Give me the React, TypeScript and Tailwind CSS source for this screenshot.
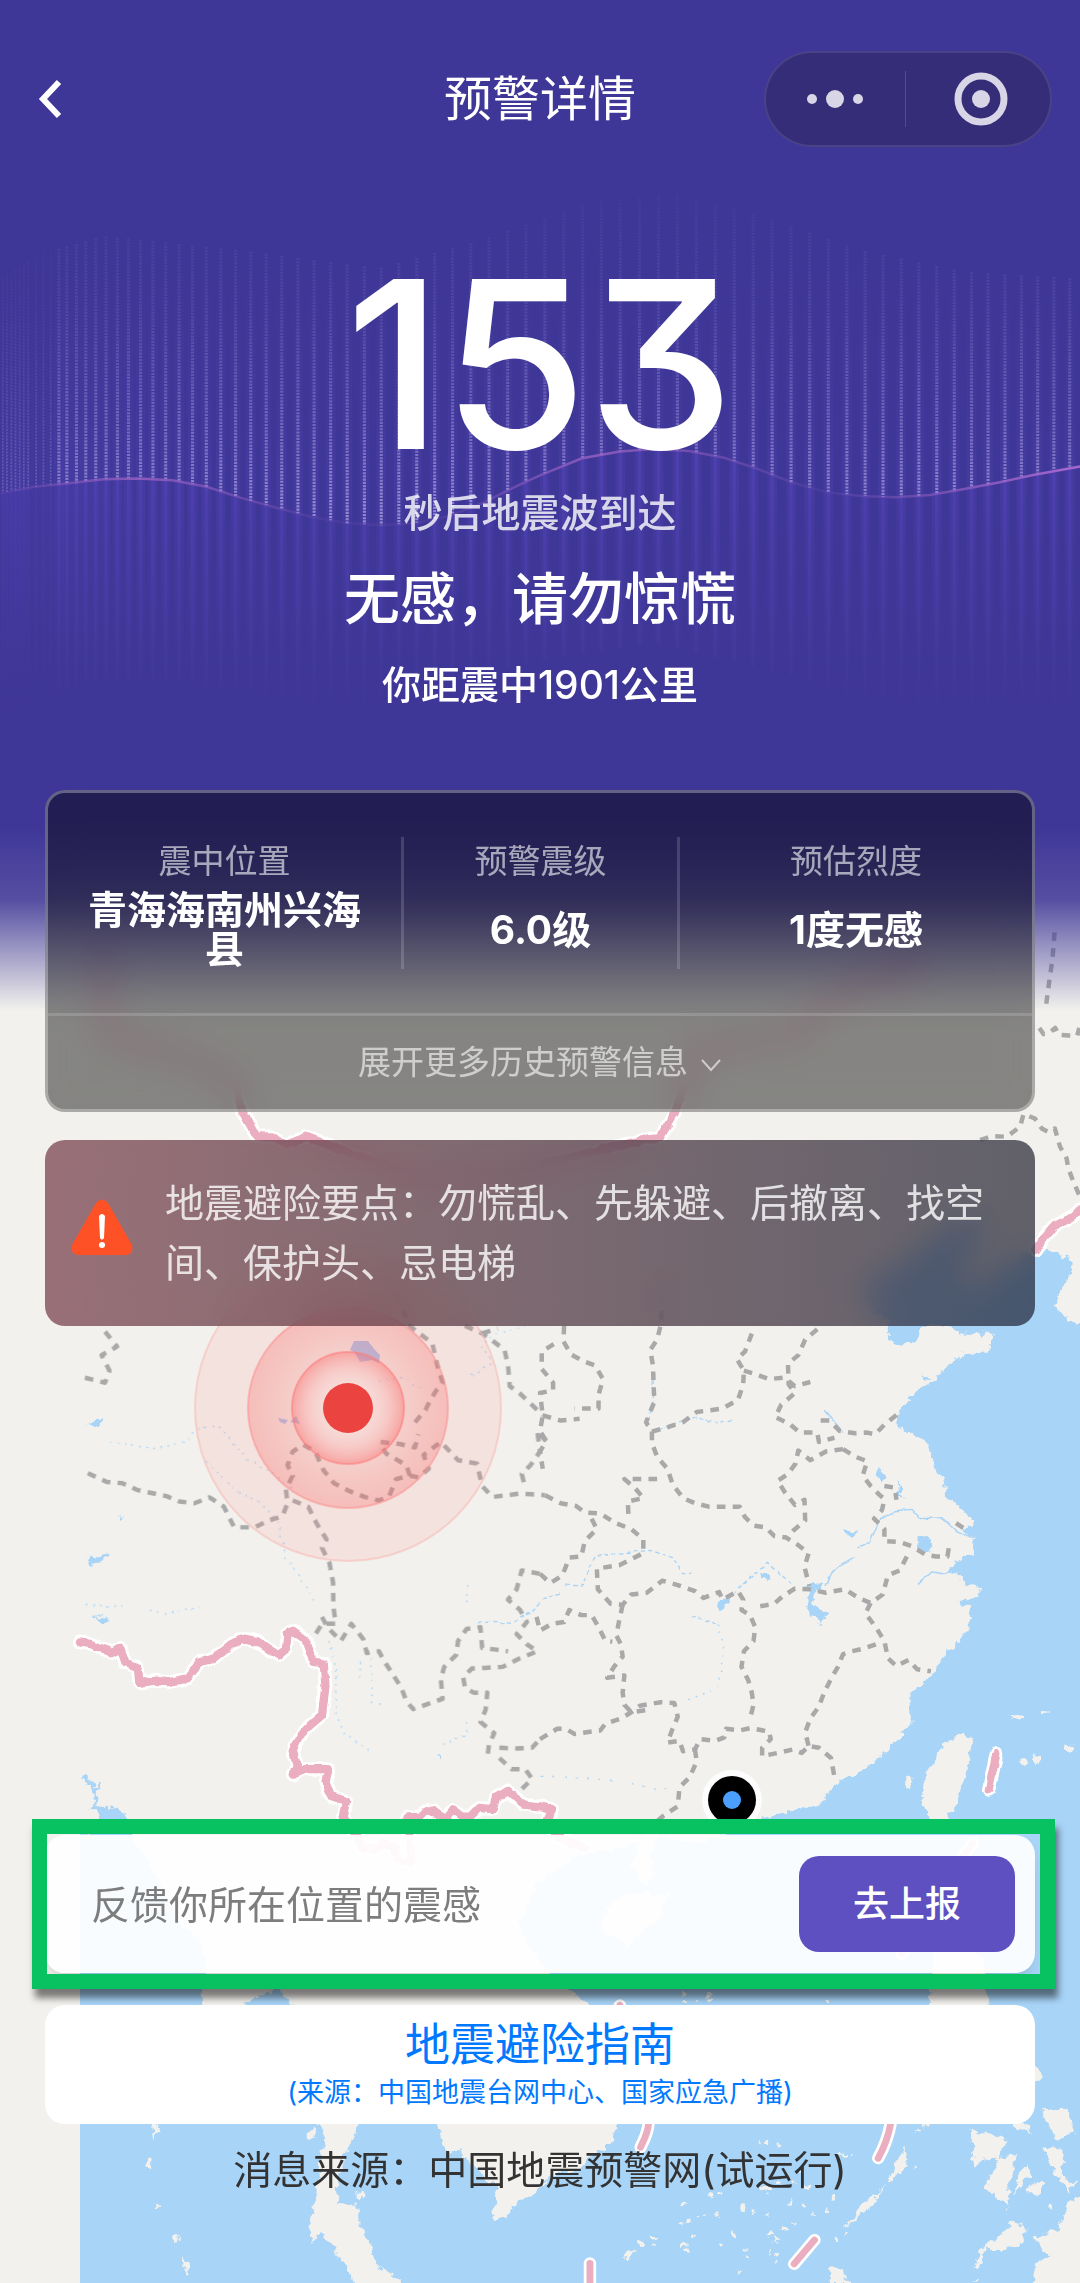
// Wave chart: x of every bar, in the chart's own units
const bars = [
  8, 20, 33, 45, 57, 69, 82, 105, 126, 147, 171, 194, 222, 249, 278, 308, 341, 373, 408, 444, 481, 520, 559,
  599, 641, 684, 728, 773, 818, 865, 912, 960, 1008, 1058, 1107, 1158, 1210, 1262, 1314, 1367, 1420, 1474,
  1527, 1582, 1637, 1692, 1746, 1801, 1857, 1912, 1967, 2022, 2077, 2132, 2187, 2242, 2297, 2351, 2405, 2459,
  2512, 2564, 2617, 2668, 2720, 2771, 2821, 2869, 2918, 2966, 3013, 3060, 3106,
];

type Point = [number, number];

const wave: Point[] = [
  [0, 820], [100, 802], [200, 792], [300, 781], [400, 779], [500, 784], [600, 802], [700, 833], [800, 860],
  [900, 885], [1000, 903], [1100, 910], [1200, 905], [1300, 885], [1400, 848], [1500, 800], [1568, 770],
  [1690, 722], [1800, 703], [1900, 696], [2000, 702], [2100, 720], [2200, 752], [2300, 790], [2400, 817],
  [2500, 828], [2600, 831], [2700, 825], [2800, 808], [2900, 790], [3000, 769], [3136, 745],
];

const waveTop: Point[] = [
  [0, 220], [120, 150], [300, 100], [700, 140], [1100, 190], [1400, 110], [1700, 10], [1950, -20], [2200, 40],
  [2500, 140], [2800, 200], [3136, 220],
];

const waveBottom: Point[] = [
  [0, 1460], [250, 1340], [500, 1340], [1100, 1440], [1500, 1300], [1900, 1240], [2300, 1330], [2700, 1460],
  [3136, 1440],
];

function heightAt(points: Point[], x: number) {
  const next = points.findIndex((p) => p[0] >= x);
  if (next <= 0) return points[0][1];
  const [x0, y0] = points[next - 1];
  const [x1, y1] = points[next];
  return Math.round(y0 + ((y1 - y0) * (x - x0)) / (x1 - x0));
}

function Wave() {
  return (
    <svg
      viewBox="0 -60 3136 1560"
      preserveAspectRatio="none"
      className="absolute inset-x-0 top-[179px] h-[557px] w-full"
      aria-hidden="true"
    >
      <defs>
        <linearGradient id="barUp" gradientUnits="userSpaceOnUse" x1="0" y1="0" x2="0" y2="860">
          <stop offset="0" stopColor="#8f86d6" stopOpacity="0.05" />
          <stop offset="0.35" stopColor="#8f86d6" stopOpacity="0.18" />
          <stop offset="0.7" stopColor="#a39adf" stopOpacity="0.45" />
          <stop offset="1" stopColor="#b3abe6" stopOpacity="0.7" />
        </linearGradient>
        <linearGradient id="barDown" gradientUnits="userSpaceOnUse" x1="0" y1="700" x2="0" y2="1440">
          <stop offset="0" stopColor="#5544bd" stopOpacity="0.8" />
          <stop offset="1" stopColor="#5544bd" stopOpacity="0" />
        </linearGradient>
        <linearGradient id="glow" gradientUnits="userSpaceOnUse" x1="0" y1="200" x2="0" y2="1300">
          <stop offset="0" stopColor="#5645bd" stopOpacity="0" />
          <stop offset="0.55" stopColor="#5645bd" stopOpacity="0.6" />
          <stop offset="1" stopColor="#5645bd" stopOpacity="0" />
        </linearGradient>
        <linearGradient id="waveLine" x1="0" x2="1" y1="0" y2="0">
          <stop offset="0" stopColor="#9b62c4" stopOpacity="0.1" />
          <stop offset="0.13" stopColor="#9b62c4" stopOpacity="0.8" />
          <stop offset="0.3" stopColor="#9b62c4" stopOpacity="0.1" />
          <stop offset="0.4" stopColor="#9b62c4" stopOpacity="0.1" />
          <stop offset="0.55" stopColor="#9b62c4" stopOpacity="0.8" />
          <stop offset="0.76" stopColor="#9b62c4" stopOpacity="0.1" />
          <stop offset="1" stopColor="#a868cf" stopOpacity="1" />
        </linearGradient>
      </defs>
      {bars.map((x) => {
        const y = heightAt(wave, x);
        const top = heightAt(waveTop, x);
        const bottom = heightAt(waveBottom, x);
        const edge = x < 160;
        return (
          <g key={x} opacity={edge ? 0.5 : 1}>
            <rect x={x - 14} y={top} width="28" height={bottom - top} fill="url(#glow)" opacity="0.4" />
            <rect x={x - 5} y={y} width="10" height={bottom - y} fill="url(#barDown)" opacity="0.7" />
            <path
              d={`M${x} ${top} L${x + 0.1} ${y}`}
              stroke="url(#barUp)"
              strokeWidth={edge ? 5 : 9}
              strokeDasharray="6 3"
            />
          </g>
        );
      })}
      <path d={`M${wave.map((p) => p.join(" ")).join(" L")}`} fill="none" stroke="url(#waveLine)" strokeWidth="7" />
    </svg>
  );
}

const westBorders = [
  "M305,92 340,135 295,160 318,205 305,240 232,222",
  "M255,503 310,528 355,532 400,552 485,570 520,585 565,590 608,573 650,600 680,660 740,660 780,640 820,628 835,590 830,550 850,510 835,480 850,440 880,420 915,440 940,495 970,532 1015,555 1060,572 1100,582 1130,570 1150,520 1190,510 1180,480 1120,445 1105,412 1160,418 1205,428 1215,390",
  "M1205,355 1235,320 1250,290 1265,265 1285,240 1270,190 1255,125 1215,95 1190,75 1130,-60",
  "M1190,510 1215,515 1245,490 1230,450 1280,412 1330,465 1385,475 1400,540 1430,572 1510,562 1583,567",
  "M850,582 895,600 920,650 948,695 935,720 957,765 967,820 968,890 975,940 935,940 910,980",
  "M935,920 950,950 990,990 1020,940 1055,985 1065,1025 1100,1020 1120,1055 1165,1125 1180,1165 1200,1188 1285,1158 1280,1100 1290,1065 1325,1030 1330,990 1355,955 1395,950 1400,1010 1440,1015 1475,1020",
  "M1350,75 1400,97 1430,118 1465,145 1475,190 1480,250 1510,272 1540,300 1576,335",
  "M1400,97 1445,83",
  "M1586,410 1560,380 1568,440 1540,480 1515,505 1525,545",
  "M1568,795 1515,785 1500,840 1475,870 1510,900 1530,935 1500,970 1530,1000 1560,1020 1510,1040 1460,1065 1410,1068 1370,1070 1345,1095 1350,1125 1375,1140 1415,1140 1410,1190 1395,1225 1435,1258 1420,1290 1415,1330",
  "M1450,1300 1500,1302 1545,1300 1568,1275",
  "M1450,1330 1485,1362 1525,1362 1545,1390 1515,1420 1495,1440",
];

const eastBorders = [
  "M70,75 68,120 90,158 125,177 160,190 183,230 170,275 170,315 100,315",
  "M40,128 5,150 5,200 38,240 38,262 0,270 8,335 0,380 18,410 0,440 8,490",
  "M8,335 60,350 115,345",
  "M360,-60 350,75 340,115 320,145 328,190 330,250 332,295 308,355 325,382 325,415 340,455 370,490 385,535 415,575 450,590 490,600 580,600 595,630 620,655 655,660 680,685 715,690 750,712 780,735 768,775 782,830",
  "M325,382 375,368 415,355 455,325 495,320 530,315 575,290 590,245 592,205 572,172 595,150 618,90",
  "M592,205 625,215 665,230 710,225 740,250 785,238",
  "M805,85 770,115 750,160 720,185 722,245 740,270 700,305 683,340 725,360 755,385 805,385 810,412 855,400",
  "M815,350 840,350 870,380 915,387 950,385 973,390 1000,362 1040,330",
  "M880,433 915,455 950,468 937,510 960,540 985,565 1000,578 993,610 970,635 1000,665 1000,700 1045,703 1080,715 1120,740 1150,745 1183,745 1190,700",
  "M880,433 830,440 785,465 750,437 742,475 720,505 690,525 712,560 740,595 768,580 770,640 735,670 715,690",
  "M1000,540 1030,545 1035,580",
  "M1065,745 1045,785 1010,800 995,855 960,880 925,865 885,840 830,850 782,840 740,838 705,860 680,882 635,890",
  "M15,567 60,590 105,598 130,617 175,620 220,648 265,665 300,695 300,735 260,755 230,770 165,780 168,840 205,882 240,885 265,855 310,850 355,815 400,828 450,845 475,865 520,848 530,870 575,845 590,870 585,900 610,915 625,950 620,990 592,1020 585,1065 605,1105 615,1140 620,1175 610,1215",
  "M150,635 165,665 130,700 120,745 85,748 65,800 30,822 0,795",
  "M340,520 295,520 245,520 275,545 300,575 255,585 257,630",
  "M240,885 228,940 222,975 235,1000 240,1035 215,1065 195,1097 245,1090 240,1140 245,1175 265,1197 315,1190",
  "M-10,920 0,960 35,940 70,935 85,900 120,915 150,915 170,950 190,990 210,992",
  "M0,1275 50,1245 75,1245 100,1260 135,1255 175,1250 190,1230 235,1215 265,1197 290,1178 350,1168 390,1170 400,1210 385,1245 370,1285 405,1280 415,1310 450,1305 465,1275 510,1280 535,1270 540,1245 580,1250 610,1243 665,1253 670,1275 645,1300 645,1325 690,1315 735,1305 760,1315 780,1295 810,1300 845,1330 855,1385",
  "M450,1305 455,1340 435,1385 405,1415 400,1470 355,1500 290,1560",
  "M960,880 945,910 975,950 1000,990 1010,1040 1035,1063 1070,1045 1095,1072 1135,1078",
  "M975,1000 940,1012 905,1020 880,1028 865,1065 845,1100 825,1140 810,1180 785,1215 770,1255 780,1295",
  "M1208,648 1232,664",
  "M1450,-790 1462,-772 1482,-778 1496,-790 1506,-770 1534,-768 1560,-768 1566,-790",
  "M1278,-464 1311,-476 1355,-474 1394,-503 1404,-540 1437,-527 1457,-498 1476,-488 1495,-498 1510,-445 1529,-411 1534,-382 1549,-343 1568,-300",
  "M1470,-860 1478,-920 1488,-990 1495,-1080",
];

const nationalBorders = [
  "M232,994 270,1000 325,1025 350,1010 365,1055 400,1065 405,1112 450,1105 490,1110 545,1098 580,1052 620,1040 670,1000 705,982 745,990 808,1032 830,1015 835,970 850,960 885,985 910,1050 940,1055 945,1120 935,1205 900,1235 865,1275 850,1310 862,1350 850,1378 890,1362 955,1362 945,1400 960,1440 1005,1455 995,1500 1035,1552 1050,1590 1090,1595 1110,1575 1145,1590 1155,1625 1195,1635 1190,1570 1180,1503 1220,1500 1240,1484 1270,1490 1295,1505 1315,1480 1340,1500 1365,1500 1390,1475 1430,1478 1440,1445 1475,1425 1520,1465 1568,1470 1603,1478 1585,1520 1620,1560 1700,1590",
  "M299,-1025 311,-764 540,-706 680,-639 705,-545 745,-475 790,-475 830,-450 890,-474 990,-436 1230,-350 1500,-370 1620,-406 1870,-465 1915,-470 1960,-545 1980,-601 2018,-726 2300,-764 2459,-900 2660,-950 2619,-996",
  "M3136,-260 3097,-232 3058,-213 3029,-179 3005,-145",
  "M2893,1318 2871,1422",
];

// Sea boundary marks, in the lower half's units
const seaMarks = [
  "M1258,128 1225,175",
  "M1058,450 1050,462",
  "M232,616 250,700",
  "M315,972 C312,1005 300,1022 292,1042",
  "M1018,972 C1010,1018 996,1048 982,1075",
  "M797,1320 738,1392",
  "M145,1390 145,1460",
];

const islands: [number, number, number, number][] = [
  [660, 1025, 14, 7], [640, 1030, 6, 8], [690, 1037, 9, 6], [880, 1060, 12, 5], [910, 1065, 6, 8],
  [655, 1165, 24, 10], [690, 1150, 8, 6], [735, 1140, 6, 12], [760, 1115, 5, 7], [775, 1160, 6, 9],
  [495, 1188, 7, 5], [525, 1183, 10, 7], [420, 1209, 12, 4], [587, 1222, 6, 13], [472, 1246, 12, 6],
  [516, 1246, 8, 8], [618, 1234, 5, 6], [663, 1246, 8, 7], [731, 1203, 6, 6], [771, 1209, 6, 5],
  [852, 1196, 6, 8], [835, 1229, 7, 5], [799, 1245, 5, 6], [428, 1265, 14, 5], [409, 1274, 5, 5],
  [557, 1302, 6, 14], [448, 1312, 7, 7], [422, 1332, 10, 12], [330, 1310, 14, 7], [328, 1332, 7, 6],
  [289, 1329, 10, 9], [714, 1286, 9, 8], [737, 1276, 5, 7], [667, 1306, 16, 6], [684, 1318, 9, 6],
  [597, 1350, 8, 6], [597, 1372, 5, 8], [669, 1353, 5, 7], [693, 1361, 8, 7], [682, 1386, 6, 6],
  [526, 1332, 5, 5], [580, 1410, 7, 5], [422, 1352, 12, 7], [858, 1323, 5, 13], [883, 1297, 4, 5],
  [422, 580, 16, 14], [487, 585, 18, 16], [420, 604, 12, 6], [453, 603, 8, 5], [495, 603, 17, 8],
  [834, 601, 6, 6], [1098, 990, 8, 12], [1120, 972, 20, 4], [1484, 1220, 6, 7], [1092, 1102, 12, 6],
];

function MapLayer() {
  return (
    <svg
      viewBox="0 0 1080 2283"
      preserveAspectRatio="xMidYMin slice"
      className="absolute inset-0 h-full w-full"
      aria-hidden="true"
    >
      <defs>
        <filter id="coast" x="-5%" y="-5%" width="110%" height="110%">
          <feTurbulence type="fractalNoise" baseFrequency="0.12" numOctaves="3" seed="4" />
          <feDisplacementMap in="SourceGraphic" scale="11" xChannelSelector="R" yChannelSelector="G" />
        </filter>
        <filter id="rough" x="-5%" y="-5%" width="110%" height="110%">
          <feTurbulence type="fractalNoise" baseFrequency="0.1" numOctaves="2" seed="9" />
          <feDisplacementMap in="SourceGraphic" scale="5" xChannelSelector="R" yChannelSelector="G" />
        </filter>
        <clipPath id="tiles">
          <rect x="80" y="0" width="1000" height="2283" />
        </clipPath>
        <radialGradient id="ring">
          <stop offset="0.4" stopColor="#fb5a5a" stopOpacity="0.1" />
          <stop offset="1" stopColor="#fb5a5a" stopOpacity="0.27" />
        </radialGradient>
        <radialGradient id="ringInner">
          <stop offset="0.4" stopColor="#ffffff" stopOpacity="0.15" />
          <stop offset="1" stopColor="#fb5a5a" stopOpacity="0.36" />
        </radialGradient>
      </defs>

      <g clipPath="url(#tiles)">
        <g filter="url(#coast)">
          {/* seas */}
          <g fill="#a8d4f7" transform="translate(540 1300) scale(0.3444)">
            <path d="M1620,75 1545,60 1515,40 1491,20 1520,-33 1539,-87 1534,-125 1462,-145 1380,-120 1290,-60 1240,-30 1215,-70 1270,-180 1290,-230 1230,-240 1160,-190 1080,-130 1000,-80 930,-40 960,20 1013,60 1013,115 1050,132 1090,120 1100,95 1130,70 1180,75 1230,98 1318,98 1300,150 1250,150 1180,185 1150,230 1110,250 1070,290 1037,340 1040,365 1080,395 1125,410 1145,480 1170,520 1180,575 1220,600 1255,640 1257,665 1215,655 1262,705 1255,740 1220,750 1170,795 1205,790 1240,830 1280,835 1270,860 1220,875 1255,890 1245,940 1230,980 1190,1015 1160,1050 1130,1100 1080,1130 1075,1190 1085,1230 1050,1260 1000,1320 930,1370 860,1405 820,1460 740,1480 700,1495 H1620Z" />
            {/* lakes and estuaries */}
            <path d="M775,830 820,820 800,850 790,880 835,905 815,940 790,910 770,885 785,860Z" />
            <path d="M880,665 900,672 920,670 910,688 885,682Z" />
            <path d="M1095,695 1115,682 1130,690 1140,715 1120,735 1098,720Z" />
            <path d="M980,485 995,500 1010,510 990,530 975,515Z" />
            <path d="M1035,520 1050,550 1060,585 1040,560Z" />
            <path d="M520,870 545,865 530,905 515,890Z" />
            <path d="M645,790 665,790 665,812 648,805Z" />
            <path d="M1110,222 1130,225 1115,238Z" />
          </g>
          <g fill="#a8d4f7" transform="translate(540 1800) scale(0.3444 0.3333)">
            <path d="M1620,30 740,30 660,50 560,95 460,130 400,120 350,105 320,150 330,230 300,255 265,200 285,130 210,150 130,150 60,200 0,240 -66,370 -40,418 0,488 35,523 80,570 140,615 240,748 250,878 225,970 210,1028 150,1068 110,1108 30,1128 -20,1188 -60,1198 -100,1248 -138,1270 -128,1160 -188,1100 -238,1050 -268,1060 -298,972 -318,900 -418,870 -518,900 -528,980 -563,1060 -593,1160 -588,1215 -533,1210 -523,1280 -493,1330 -478,1390 -438,1415 -350,1500 H1620Z" />
            <path d="M-1400,100 -1182,100 -1178,130 -1118,220 -1048,370 -998,410 -968,470 -968,520 -988,615 -940,690 -870,690 -858,615 -768,565 -718,615 -728,748 -688,900 -648,972 -623,1010 -638,1100 -653,1200 -668,1270 -663,1330 -638,1290 -598,1350 -558,1410 -520,1500 H-1400Z" />
          </g>
          <g fill="#a8d4f7" transform="translate(0 1300) scale(0.3444)">
            <path d="M255,740 285,745 315,738 300,760 262,775Z" />
            <path d="M252,355 290,350 290,368 270,373Z" />
            <path d="M268,920 295,918 318,926 290,935Z" />
            <path d="M345,625 356,630 350,643Z" />
            <path d="M262,1475 285,1470 340,1475 375,1510 385,1560 250,1560 300,1510Z" />
            <path d="M1274,1315 1283,1318 1280,1342Z" />
          </g>
          <g fill="none" stroke="#a8d4f7" strokeWidth="9" transform="translate(0 1300) scale(0.3444)">
            <path d="M235,1382 262,1400 280,1440 270,1475 300,1500 M290,1400 275,1430" />
          </g>
          {/* islands in the seas */}
          <g fill="#f2f1ed" transform="translate(540 1800) scale(0.3444 0.3333)">
            <path d="M1225,-200 1257,-178 1250,-126 1225,-34 1210,18 1180,50 1170,98 1125,48 1108,-7 1115,-64 1170,-167Z" />
            <path d="M210,300 300,280 370,285 350,350 300,400 255,435 190,400 180,350Z" />
            <path d="M1145,450 1215,430 1290,480 1300,590 1280,680 1340,780 1440,800 1458,825 1400,900 1380,940 1430,1000 1380,980 1250,880 1180,800 1130,620Z" />
            <path d="M1250,990 1310,1005 1355,1020 1330,1080 1285,1075 1262,1110Z" />
            <path d="M1330,1075 1385,1065 1360,1150 1360,1225 1320,1190 1297,1160Z" />
            <path d="M1415,1090 1420,1120 1370,1195 1395,1120Z" />
            <path d="M1440,1140 1470,1150 1450,1180 1410,1180Z" />
            <path d="M1450,930 1535,930 1550,1000 1500,1020 1475,970Z" />
            <path d="M1460,1040 1520,1050 1515,1130 1555,1150 1540,1180 1490,1110Z" />
            <path d="M1260,1405 1285,1340 1340,1300 1370,1265 1410,1280 1400,1330 1345,1350 1290,1350 1275,1410Z" />
            <path d="M1430,1310 1500,1290 1540,1200 1600,1190 1600,1480 1430,1480 1440,1390 1480,1370Z" />
            <path d="M1055,1040 1065,1100 1000,1160 960,1220 880,1290 920,1230 1010,1150Z" />
            <path d="M835,1449 850,1400 875,1410 905,1449Z" />
            <path d="M1250,1440 1280,1440 1275,1449Z" />
            <path d="M242,1378 262,1350 285,1355 255,1375Z" />
            {islands.map(([x, y, w, h]) => (
              <ellipse key={`${x}-${y}`} cx={x} cy={y} rx={w / 2 + 2} ry={h / 2 + 2} />
            ))}
            <ellipse cx="1390" cy="-252" rx="14" ry="8" />
            <ellipse cx="1468" cy="-261" rx="12" ry="6" />
            <ellipse cx="1535" cy="-155" rx="13" ry="11" />
            <ellipse cx="1410" cy="-114" rx="15" ry="10" />
            <ellipse cx="1443" cy="-126" rx="12" ry="12" />
            <ellipse cx="1069" cy="-54" rx="9" ry="17" />
          </g>
          <g fill="#f2f1ed" transform="translate(0 1800) scale(0.3444 0.3333)">
            <path d="M440,972 460,972 450,1030Z" />
            <ellipse cx="432" cy="1088" rx="8" ry="15" />
            <ellipse cx="457" cy="1217" rx="6" ry="5" />
            <ellipse cx="511" cy="1315" rx="8" ry="13" />
            <path d="M528,1368 552,1400 542,1422 530,1400Z" />
            <ellipse cx="905" cy="1005" rx="12" ry="16" />
            <ellipse cx="1045" cy="1185" rx="7" ry="15" />
          </g>
        </g>

        {/* rivers */}
        <g fill="none" stroke="#a8d4f7" strokeWidth="4" strokeDasharray="12 9" filter="url(#rough)">
          <g transform="translate(540 1300) scale(0.3444)">
            <path d="M75,828 120,830 160,745 230,735 320,727 385,748 415,795 440,790" />
            <path d="M530,880 600,815 660,765 720,815 740,838" />
            <path d="M830,830 850,790 870,770 915,745" strokeDasharray="none" />
            <path d="M925,720 960,700 985,640 1030,612 1080,608 1105,635 1170,632 1210,670 1255,690" strokeDasharray="none" />
            <path d="M310,370 325,310 330,210" />
            <path d="M345,380 450,340 520,358 560,350" />
            <path d="M440,918 515,940" />
            <path d="M515,940 530,990 530,1070 510,1130 420,1165" strokeDasharray="5 18" />
            <path d="M1095,825 1135,790 1170,795" strokeDasharray="none" />
            <path d="M825,320 860,360 880,385" strokeDasharray="none" />
            <path d="M5,1380 130,1390 240,1395 300,1415 400,1422" strokeDasharray="5 28" />
            <path d="M-180,935 -90,938 -30,910 20,860 60,850" />
          </g>
          <g transform="translate(0 1300) scale(0.3444)" strokeDasharray="5 16">
            <path d="M320,415 455,432 540,410 580,370 640,370 720,465 790,500 850,550" />
            <path d="M600,470 680,550 760,590 810,650 825,740 880,820 915,880" />
            <path d="M248,884 370,892 M435,900 480,912 580,892" />
            <path d="M955,990 975,1080 975,1200 1000,1260 1070,1305" />
            <path d="M1080,1040 1080,1170 1115,1175 M1050,1050 1040,1105" />
            <path d="M1370,220 1430,180 1395,130 1440,100 1525,75" />
            <path d="M1100,235 1170,225 1220,255" />
            <path d="M1355,830 1355,890 M1285,1290 1355,1260 1355,1220" />
          </g>
        </g>

        {/* province borders */}
        <g fill="none" stroke="#a9a9a9" strokeWidth="13" strokeDasharray="25 21" strokeLinejoin="round">
          <g transform="translate(0 1300) scale(0.3444)">
            {westBorders.map((d) => (
              <path key={d} d={d} />
            ))}
          </g>
          <g transform="translate(540 1300) scale(0.3444)">
            {eastBorders.map((d) => (
              <path key={d} d={d} />
            ))}
          </g>
        </g>
      </g>

      {/* national borders */}
      <g filter="url(#rough)" fill="none" strokeLinecap="round" strokeLinejoin="round">
        <g transform="translate(0 1300) scale(0.3444)">
          {nationalBorders.map((d) => (
            <path key={d} d={d} stroke="#ffffff" strokeWidth="40" />
          ))}
          {nationalBorders.map((d) => (
            <path key={d} d={d} stroke="#ebadc0" strokeWidth="24" />
          ))}
        </g>
      </g>
      <g
        transform="translate(540 1800) scale(0.3444 0.3333)"
        fill="none"
        strokeLinecap="round"
        strokeLinejoin="round"
      >
        {seaMarks.map((d) => (
          <path key={d} d={d} stroke="#ffffff" strokeWidth="36" />
        ))}
        {seaMarks.map((d) => (
          <path key={d} d={d} stroke="#ebadc0" strokeWidth="20" />
        ))}
      </g>

      {/* epicentre */}
      <g fill="#a8c8f2">
        <path d="M354,1341 368,1341 375,1350 380,1355 379,1363 372,1360 360,1362 355,1353 350,1350Z" />
        <path d="M278,1418 288,1420 285,1424 280,1422Z M290,1422 296,1416 300,1424Z" />
      </g>
      <circle cx="348" cy="1408" r="153" fill="#ff8a80" fillOpacity="0.14" stroke="#f9b5b0" strokeOpacity="0.5" strokeWidth="2" />
      <circle cx="348" cy="1408" r="100" fill="url(#ring)" stroke="#fb8d8d" strokeOpacity="0.5" strokeWidth="2" />
      <circle cx="348" cy="1408" r="56" fill="url(#ringInner)" stroke="#fb8080" strokeOpacity="0.6" strokeWidth="2" />
      <circle cx="348" cy="1408" r="25" fill="#eb433f" />

      {/* current position */}
      <circle cx="732" cy="1800" r="30" fill="#ffffff" fillOpacity="0.85" />
      <circle cx="732" cy="1800" r="24" fill="#000000" />
      <circle cx="732" cy="1800" r="9" fill="#4a9fff" />
    </svg>
  );
}

function Header() {
  return (
    <header className="grid h-24 grid-cols-[1fr_auto_1fr] items-center px-7">
      <button type="button" aria-label="返回" className="flex h-24 w-16 items-center">
        <svg viewBox="0 0 24 42" className="ml-2.5 h-[42px] w-6" fill="none" stroke="#ffffff" strokeWidth="6">
          <path d="M21 4 5 21l16 17" />
        </svg>
      </button>
      <h1 className="text-5xl text-white">预警详情</h1>
      <div className="flex h-24 w-72 items-center justify-self-end rounded-full border-2 border-white/10 bg-[#352d78]">
        <button type="button" aria-label="更多" className="flex flex-1 justify-center">
          <svg viewBox="0 0 58 20" className="h-5 w-[58px]" fill="#d8d6e6">
            <circle cx="6" cy="10" r="5" />
            <circle cx="29" cy="10" r="9" />
            <circle cx="52" cy="10" r="5" />
          </svg>
        </button>
        <div className="h-14 w-px bg-white/15" />
        <button type="button" aria-label="关闭" className="flex flex-1 justify-center pl-1.5">
          <svg viewBox="0 0 54 54" className="size-[54px]" fill="none">
            <circle cx="27" cy="27" r="23" stroke="#d8d6e6" strokeWidth="7" />
            <circle cx="27" cy="27" r="9" fill="#d8d6e6" />
          </svg>
        </button>
      </div>
    </header>
  );
}

const details = [
  { label: "震中位置", value: "青海海南州兴海县" },
  { label: "预警震级", value: "6.0级" },
  { label: "预估烈度", value: "1度无感" },
];

function DetailCard() {
  return (
    <section className="overflow-hidden rounded-[20px] border-[3px] border-white/30 bg-black/45 backdrop-blur-lg">
      <dl className="grid grid-cols-[356fr_276fr_352fr] divide-x-3 divide-white/15 py-11">
        {details.map((item) => (
          <div key={item.label} className="px-9 text-center">
            <dt className="text-[33px] leading-12 text-white/60">{item.label}</dt>
            <dd className="mt-1 flex h-20 items-center justify-center text-[39px] leading-[39px] font-bold text-white">
              {item.value}
            </dd>
          </div>
        ))}
      </dl>
      <button
        type="button"
        className="flex h-24 w-full items-center justify-center gap-3 border-t-3 border-white/15 text-[33px] text-white/60"
      >
        展开更多历史预警信息
        <svg viewBox="0 0 22 14" className="mt-1 h-3.5 w-[22px]" fill="none" stroke="currentColor" strokeWidth="2">
          <path d="M2 2l9 10 9-10" />
        </svg>
      </button>
    </section>
  );
}

function Tips() {
  return (
    <section className="flex items-center gap-8 rounded-[20px] bg-linear-to-r from-[#672633]/64 to-[#0f0f1f]/64 py-[33px] pr-8 pl-[26px] backdrop-blur-lg">
      <svg viewBox="0 0 62 56" className="mb-3 h-14 w-[62px] shrink-0" aria-hidden="true">
        <path d="M25 4q6-7 12 0l24 42q2 9-6 10H7q-8-1-6-10z" fill="#ff5126" />
        <path d="M28 17q3-4 6 0l-1 22q-2 3-4 0z" fill="#ffffff" />
        <circle cx="31" cy="46" r="3" fill="#ffffff" />
      </svg>
      <p className="text-[39px] leading-15 text-white/80">
        地震避险要点：勿慌乱、先躲避、后撤离、找空间、保护头、忌电梯
      </p>
    </section>
  );
}

export default function App() {
  return (
    <div className="relative flex min-h-screen flex-col overflow-hidden bg-[#f2f1ed] font-['Inter','Noto_Sans_CJK_SC',sans-serif]">
      <MapLayer />
      <div className="absolute inset-x-0 top-0 h-[1010px] bg-linear-to-b from-[#3f3797] from-82% via-[#3f3797]/88 via-89% to-[#3f3797]/0" />
      <Wave />

      <div className="relative flex flex-1 flex-col pt-[51px]">
        <Header />

        <section className="mt-[100px] text-center text-white">
          <p className="text-[234px] leading-none font-medium [font-feature-settings:'cv09']">153</p>
          <p className="mt-1 text-[39px] leading-14 font-medium text-white/80">秒后地震波到达</p>
          <p className="mt-4 text-[56px] leading-21 font-medium">无感，请勿惊慌</p>
          <p className="mt-4 text-[39px] leading-14 font-medium">你距震中1901公里</p>
        </section>

        <main className="mt-[77px] flex flex-1 flex-col px-[45px]">
          <DetailCard />
          <div className="mt-7">
            <Tips />
          </div>

          <form className="relative mt-auto flex h-[138px] items-center rounded-[20px] bg-white/92 pr-5 pl-[46px] shadow-lg">
            <input
              type="text"
              aria-label="反馈你所在位置的震感"
              placeholder="反馈你所在位置的震感"
              className="h-24 min-w-0 flex-1 bg-transparent text-[39px] text-[#333333] outline-none placeholder:text-[#7d7d7d]"
            />
            <button
              type="button"
              className="h-24 w-[216px] rounded-[20px] bg-[#5e50c0] text-[36px] font-medium text-white"
            >
              去上报
            </button>
            <div className="pointer-events-none absolute -top-4 -right-5 -bottom-4 -left-[13px] border-[15px] border-[#08c160] shadow-[3px_9px_7px_rgba(0,0,0,0.5)]" />
          </form>

          <a
            href="#guide"
            className="relative mt-8 block h-[119px] rounded-[20px] bg-white pt-3 text-center text-[#0079ff]"
          >
            <span className="block text-[45px] leading-14">地震避险指南</span>
            <span className="block text-[27px] leading-10">(来源：中国地震台网中心、国家应急广播)</span>
          </a>
        </main>

        <footer className="pt-4 pb-[83px] text-center text-[39px] leading-15 text-[#333333]">
          消息来源：中国地震预警网(试运行)
        </footer>
      </div>
    </div>
  );
}
